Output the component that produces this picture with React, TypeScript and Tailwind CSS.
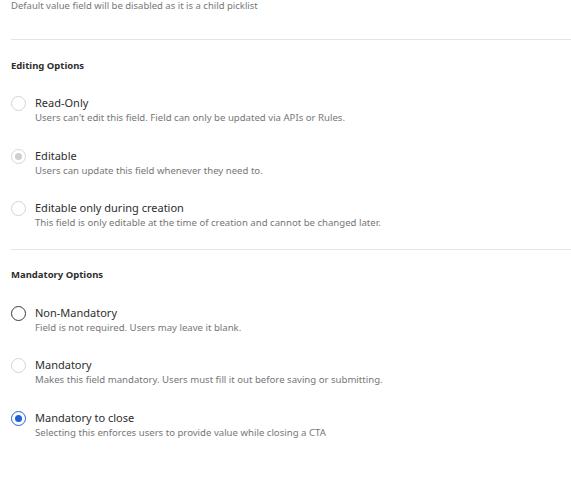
import React from "react";

type Opt = { label: string; desc: string; state: "off" | "disabled" | "dark" | "on" };

const editing: Opt[] = [
  { label: "Read-Only", desc: "Users can't edit this field. Field can only be updated via APIs or Rules.", state: "off" },
  { label: "Editable", desc: "Users can update this field whenever they need to.", state: "disabled" },
  { label: "Editable only during creation", desc: "This field is only editable at the time of creation and cannot be changed later.", state: "off" },
];

const mandatory: Opt[] = [
  { label: "Non-Mandatory", desc: "Field is not required. Users may leave it blank.", state: "dark" },
  { label: "Mandatory", desc: "Makes this field mandatory. Users must fill it out before saving or submitting.", state: "off" },
  { label: "Mandatory to close", desc: "Selecting this enforces users to provide value while closing a CTA", state: "on" },
];

const Radio = ({ state }: { state: Opt["state"] }) => {
  if (state === "on")
    return (
      <div className="w-[15px] h-[15px] rounded-full border-[1.5px] border-[#1f62d6] flex items-center justify-center shrink-0">
        <div className="w-[7px] h-[7px] rounded-full bg-[#1f62d6]" />
      </div>
    );
  if (state === "disabled")
    return (
      <div className="w-[15px] h-[15px] rounded-full border border-[#d6d6d6] flex items-center justify-center shrink-0">
        <div className="w-[7px] h-[7px] rounded-full bg-[#cfcfcf]" />
      </div>
    );
  if (state === "dark")
    return <div className="w-[15px] h-[15px] rounded-full border-[1.5px] border-[#3a3a3a] shrink-0" />;
  return <div className="w-[15px] h-[15px] rounded-full border border-[#d4d4d4] shrink-0" />;
};

const Option = ({ o }: { o: Opt }) => (
  <div className="flex items-start gap-[9px] h-[52.5px]">
    <div className="pt-[1px]">
      <Radio state={o.state} />
    </div>
    <div className="flex flex-col">
      <div className="text-[11px] leading-[15px] text-[#2e2e2e]">{o.label}</div>
      <div className="text-[9.6px] leading-[14px] text-[#777] mt-[1px]">{o.desc}</div>
    </div>
  </div>
);

export default function App() {
  return (
    <div className="w-[571px] h-[480px] bg-white pl-[11px] overflow-hidden" style={{ fontFamily: '"Noto Sans", sans-serif' }}>
      <div className="text-[9.5px] leading-[12px] text-[#777]">Default value field will be disabled as it is a child picklist</div>
      <div className="border-t border-[#e4e4e4] mt-[27px]" />
      <div className="text-[9.5px] font-bold text-[#2e2e2e] leading-[12px] mt-[20px]">Editing Options</div>
      <div className="mt-[23px]">
        {editing.map((o) => (
          <Option key={o.label} o={o} />
        ))}
      </div>
      <div className="border-t border-[#e4e4e4] -mt-[4px]" />
      <div className="text-[9.5px] font-bold text-[#2e2e2e] leading-[12px] mt-[19px]">Mandatory Options</div>
      <div className="mt-[24px]">
        {mandatory.map((o) => (
          <Option key={o.label} o={o} />
        ))}
      </div>
    </div>
  );
}
